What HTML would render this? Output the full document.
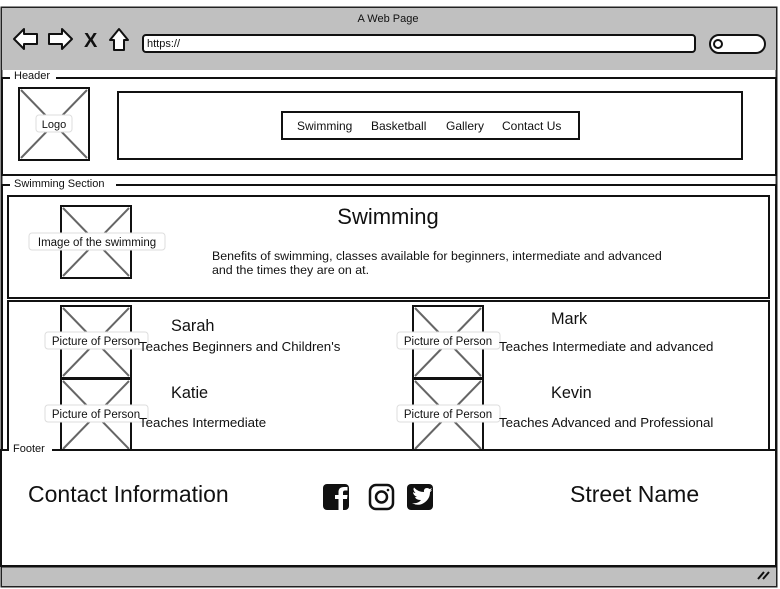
<!DOCTYPE html>
<html><head><meta charset="utf-8"><style>
html,body{margin:0;padding:0;background:#fff;width:780px;height:589px;overflow:hidden}
svg{display:block;font-family:"Liberation Sans",sans-serif}
</style></head><body>
<svg width="780" height="589" viewBox="0 0 780 589">
<rect x="1.5" y="7.5" width="775" height="579" fill="#fff" stroke="#222" stroke-width="2"/>
<rect x="2" y="8" width="774" height="62" fill="#c0c0c0"/>
<text x="388" y="22" font-size="11" text-anchor="middle" fill="#111">A Web Page</text>
<path d="M14 39 L24 29 L24 34 L37 34 L37 44 L24 44 L24 49 Z" fill="#fff" stroke="#111" stroke-width="2" stroke-linejoin="round"/>
<path d="M72 39 L62 29 L62 34 L49 34 L49 44 L62 44 L62 49 Z" fill="#fff" stroke="#111" stroke-width="2" stroke-linejoin="round"/>
<text x="84" y="47" font-size="20" font-weight="bold" fill="#111">X</text>
<path d="M110 40 L119 29 L128 40 L124 40 L124 50 L114 50 L114 40 Z" fill="#fff" stroke="#111" stroke-width="2" stroke-linejoin="round"/>
<rect x="143" y="35" width="552" height="17" rx="3" fill="#fff" stroke="#111" stroke-width="2"/>
<text x="147" y="47" font-size="11" fill="#111">https://</text>
<rect x="710" y="35" width="55" height="18" rx="9" fill="#fff" stroke="#111" stroke-width="2"/>
<circle cx="718" cy="44" r="4" fill="none" stroke="#111" stroke-width="2"/>
<rect x="2" y="78" width="774" height="97" fill="none" stroke="#111" stroke-width="2"/>
<rect x="10" y="70" width="46" height="12" fill="#fff"/>
<text x="14" y="79" font-size="11" fill="#111">Header</text>
<rect x="19" y="88" width="70" height="72" fill="#fff" stroke="#111" stroke-width="2"/>
<path d="M21 90 L87 158 M87 90 L21 158" stroke="#666" stroke-width="2"/>
<rect x="36" y="115" width="36" height="17" rx="3" fill="#fff" stroke="#ddd"/>
<text x="54" y="128" font-size="11" text-anchor="middle" fill="#111">Logo</text>
<rect x="118" y="92" width="624" height="67" fill="#fff" stroke="#111" stroke-width="2"/>
<rect x="282" y="112" width="297" height="27" fill="#fff" stroke="#111" stroke-width="2"/>
<text x="297" y="130" font-size="12" fill="#111">Swimming</text>
<text x="371" y="130" font-size="12" fill="#111">Basketball</text>
<text x="446" y="130" font-size="12" fill="#111">Gallery</text>
<text x="502" y="130" font-size="12" fill="#111">Contact Us</text>
<rect x="2" y="185" width="774" height="265" fill="none" stroke="#111" stroke-width="2"/>
<rect x="10" y="177" width="106" height="12" fill="#fff"/>
<text x="14" y="187" font-size="11" fill="#111">Swimming Section</text>
<rect x="8" y="196" width="761" height="102" fill="#fff" stroke="#111" stroke-width="2"/>
<rect x="61" y="206" width="70" height="72" fill="#fff" stroke="#111" stroke-width="2"/>
<path d="M63 208 L129 276 M129 208 L63 276" stroke="#666" stroke-width="2"/>
<rect x="29" y="233" width="136" height="17" rx="3" fill="#fff" stroke="#ddd"/>
<text x="97" y="246" font-size="11.5" text-anchor="middle" fill="#111">Image of the swimming</text>
<text x="388" y="224" font-size="22" text-anchor="middle" fill="#111">Swimming</text>
<text x="212" y="260" font-size="12.4" fill="#111">Benefits of swimming, classes available for beginners, intermediate and advanced</text>
<text x="212" y="274" font-size="12.4" fill="#111">and the times they are on at.</text>
<rect x="8" y="301" width="761" height="160" fill="#fff" stroke="#111" stroke-width="2"/>
<g stroke="#111" stroke-width="2" fill="#fff">
<rect x="61" y="306" width="70" height="72"/><rect x="61" y="379" width="70" height="72"/>
<rect x="413" y="306" width="70" height="72"/><rect x="413" y="379" width="70" height="72"/>
</g>
<g stroke="#666" stroke-width="2">
<path d="M63 308 L129 376 M129 308 L63 376 M63 381 L129 449 M129 381 L63 449"/>
<path d="M415 308 L481 376 M481 308 L415 376 M415 381 L481 449 M481 381 L415 449"/>
</g>
<g fill="#fff" stroke="#ddd">
<rect x="45" y="332" width="103" height="17" rx="3"/><rect x="45" y="405" width="103" height="17" rx="3"/>
<rect x="397" y="332" width="103" height="17" rx="3"/><rect x="397" y="405" width="103" height="17" rx="3"/>
</g>
<g font-size="11.5" fill="#111" text-anchor="middle">
<text x="96" y="345">Picture of Person</text><text x="96" y="418">Picture of Person</text>
<text x="448" y="345">Picture of Person</text><text x="448" y="418">Picture of Person</text>
</g>
<g font-size="16.3" fill="#111">
<text x="171" y="331">Sarah</text><text x="551" y="324">Mark</text>
<text x="171" y="398">Katie</text><text x="551" y="398">Kevin</text>
</g>
<g font-size="13.3" fill="#111">
<text x="139" y="351">Teaches Beginners and Children's</text>
<text x="499" y="351">Teaches Intermediate and advanced</text>
<text x="139" y="427">Teaches Intermediate</text>
<text x="499" y="427">Teaches Advanced and Professional</text>
</g>
<rect x="1" y="450" width="775" height="116" fill="#fff" stroke="#111" stroke-width="2"/>
<rect x="9" y="442" width="43" height="12" fill="#fff"/>
<text x="13" y="452" font-size="11" fill="#111">Footer</text>
<text x="28" y="502" font-size="23" fill="#111">Contact Information</text>
<text x="570" y="502" font-size="23" fill="#111">Street Name</text>
<rect x="323" y="484" width="26" height="26" rx="4" fill="#111"/>
<path d="M343 510 L343 499 L347 499 L347.5 495 L343 495 L343 492.5 Q343 490.5 345 490.5 L347.5 490.5 L347.5 487 L344 487 Q338.5 487 338.5 492 L338.5 495 L335 495 L335 499 L338.5 499 L338.5 510 Z" fill="#fff"/>
<rect x="370" y="485" width="23" height="24" rx="6" fill="none" stroke="#111" stroke-width="2.5"/>
<circle cx="381.5" cy="497" r="5.5" fill="none" stroke="#111" stroke-width="2.5"/>
<circle cx="388" cy="490" r="1.3" fill="#111"/>
<rect x="407" y="484" width="26" height="26" rx="4" fill="#111"/>
<path d="M412 503 Q418 504 421 500 Q416 500 415 497 Q416 497 417 497 Q413 495 413 492 Q414 493 415.5 493 Q412.5 490 414 487.5 Q418 492 424 492 Q423.5 488 427 488 Q428.5 488 429.5 489 Q431 488.7 432 488 Q431.5 489.5 430 490.5 Q431.5 490.3 432 490 Q431 491.5 430 492 Q430 500 422 504 Q417 506 412 503 Z" fill="#fff"/>
<rect x="2" y="567" width="774" height="19" fill="#c0c0c0"/>
<line x1="1" y1="566.5" x2="777" y2="566.5" stroke="#111" stroke-width="2"/>
<path d="M758 579 L764 572 M763 579 L769 572" stroke="#111" stroke-width="2"/>
</svg>
</body></html>
